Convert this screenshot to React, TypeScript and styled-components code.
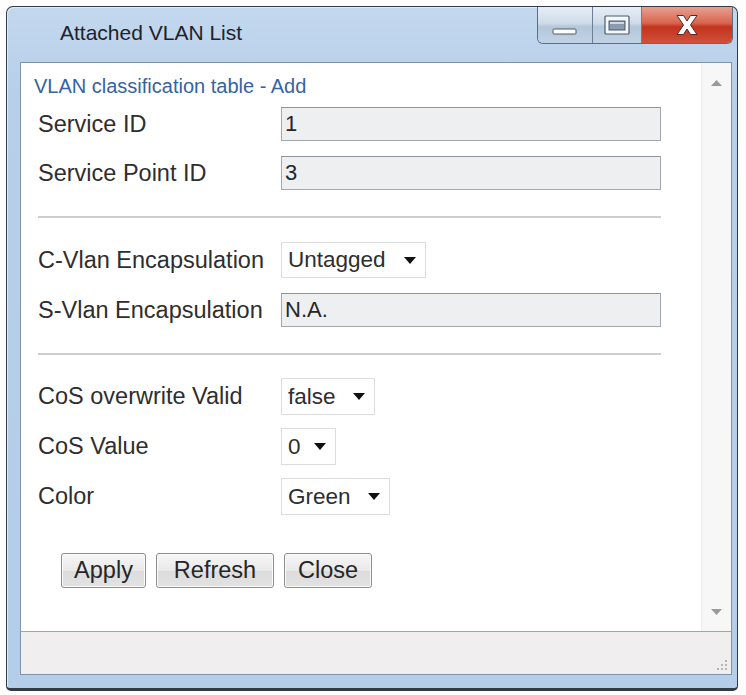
import styled, { createGlobalStyle } from "styled-components";

const GlobalStyle = createGlobalStyle`
  html, body {
    margin: 0;
    padding: 0;
    background: #fdfdfd;
  }
  body {
    font-family: "Liberation Sans", Arial, sans-serif;
  }
  * {
    box-sizing: border-box;
  }
`;

type Field = {
  label: string;
  kind: 'input' | 'select';
  value: string;
  width?: number;
  gap: number;
  height: number;
}

const topFields: Field[] = [
  { label: 'Service ID', kind: 'input', value: '1', gap: 9, height: 34 },
  { label: 'Service Point ID', kind: 'input', value: '3', gap: 15, height: 34 },
];

const vlanFields: Field[] = [
  { label: 'C-Vlan Encapsulation', kind: 'select', value: 'Untagged', width: 145, gap: 24, height: 36 },
  { label: 'S-Vlan Encapsulation', kind: 'input', value: 'N.A.', gap: 15, height: 34 },
];

const cosFields: Field[] = [
  { label: 'CoS overwrite Valid', kind: 'select', value: 'false', width: 94, gap: 23, height: 37 },
  { label: 'CoS Value', kind: 'select', value: '0', width: 55, gap: 13, height: 37 },
  { label: 'Color', kind: 'select', value: 'Green', width: 109, gap: 13, height: 37 },
];

const Caret = () => (
  <svg width="12" height="7" viewBox="0 0 12 7">
    <path d="M0 0 L12 0 L6 7 Z" fill="#111" />
  </svg>
);

const FieldRow: React.FC<{ field: Field }> = ({ field }) => (
  <Row $gap={field.gap}>
    <Label>{field.label}</Label>
    {field.kind === 'input' ? (
      <TextBox $h={field.height}>{field.value}</TextBox>
    ) : (
      <SelectBox $h={field.height} $w={field.width ?? 100}>
        <span>{field.value}</span>
        <Caret />
      </SelectBox>
    )}
  </Row>
);

export default function App() {
  return (
    <>
      <GlobalStyle />
      <Page>
        <Window>
          <TitleBar>
            <Title>Attached VLAN List</Title>
            <Captions>
              <CapButton>
                <svg width="26" height="8" viewBox="0 0 26 8">
                  <rect x="1" y="1" width="23" height="5" rx="1" fill="#fff" stroke="#4d5a69" strokeWidth="1" />
                </svg>
              </CapButton>
              <CapButton $narrow>
                <svg width="28" height="22" viewBox="0 0 28 22">
                  <rect x="2" y="2" width="24" height="18" rx="1" fill="#f4f7fb" stroke="#4d5a69" strokeWidth="1.2" />
                  <rect x="6" y="7" width="16" height="9" fill="#8a9ab0" stroke="#4d5a69" strokeWidth="1" />
                  <rect x="7" y="8" width="14" height="2" fill="#cfd9e5" />
                </svg>
              </CapButton>
              <CloseButton>
                <svg width="26" height="22" viewBox="0 0 26 22">
                  <path d="M3 1.5 L9.5 1.5 L13 7 L16.5 1.5 L23 1.5 L16.5 11 L23 20.5 L16.5 20.5 L13 15 L9.5 20.5 L3 20.5 L9.5 11 Z" fill="#fff" stroke="#5a2a22" strokeWidth="1" strokeLinejoin="round" />
                </svg>
              </CloseButton>
            </Captions>
          </TitleBar>
          <Client>
            <Main>
              <Content>
                <Heading>VLAN classification table - Add</Heading>
                <Form>
                  {topFields.map(f => <FieldRow key={f.label} field={f} />)}
                  <Separator />
                  {vlanFields.map(f => <FieldRow key={f.label} field={f} />)}
                  <Separator />
                  {cosFields.map(f => <FieldRow key={f.label} field={f} />)}
                  <Buttons>
                    <Button $w={85}>Apply</Button>
                    <Button $w={118}>Refresh</Button>
                    <Button $w={88}>Close</Button>
                  </Buttons>
                </Form>
              </Content>
              <ScrollBar>
                <svg width="11" height="6" viewBox="0 0 11 6">
                  <path d="M0 6 L5.5 0 L11 6 Z" fill="#9a9a9a" />
                </svg>
                <svg width="11" height="6" viewBox="0 0 11 6">
                  <path d="M0 0 L11 0 L5.5 6 Z" fill="#9a9a9a" />
                </svg>
              </ScrollBar>
            </Main>
            <StatusBar>
              <svg width="12" height="12" viewBox="0 0 12 12">
                <g fill="#b6b6b6">
                  <rect x="9" y="1" width="2" height="2" />
                  <rect x="5" y="5" width="2" height="2" />
                  <rect x="9" y="5" width="2" height="2" />
                  <rect x="1" y="9" width="2" height="2" />
                  <rect x="5" y="9" width="2" height="2" />
                  <rect x="9" y="9" width="2" height="2" />
                </g>
              </svg>
            </StatusBar>
          </Client>
        </Window>
      </Page>
    </>
  );
}

const Page = styled.div`
  padding: 6px 8px 4px 6px;
`;

const Window = styled.div`
  width: 732px;
  height: 685px;
  display: flex;
  flex-direction: column;
  padding: 0 5px 13px 13px;
  border: 1px solid #353b42;
  border-bottom-width: 3px;
  border-radius: 7px 7px 5px 5px;
  background: linear-gradient(180deg, #c3d8ee 0%, #b7cfe9 12%, #b4cde8 100%);
  box-shadow: inset 1px 1px 0 #dfeaf6;
`;

const TitleBar = styled.div`
  height: 55px;
  display: flex;
  justify-content: space-between;
  align-items: flex-start;
  margin-left: -13px;
  margin-right: -1px;
`;

const Title = styled.div`
  padding: 14px 0 0 53px;
  font-size: 21px;
  line-height: 24px;
  color: #1e2329;
`;

const Captions = styled.div`
  display: flex;
  height: 37px;
  border: 1px solid #5c6d82;
  border-top: none;
  border-radius: 0 0 6px 6px;
  overflow: hidden;
`;

const CapButton = styled.div<{ $narrow?: boolean }>`
  width: ${p => (p.$narrow ? 49 : 55)}px;
  display: flex;
  align-items: center;
  justify-content: center;
  padding-top: ${p => (p.$narrow ? 0 : 14)}px;
  border-right: 1px solid #6e7f94;
  background: linear-gradient(180deg, #e6eef7 0%, #cfdbe9 45%, #b4c6da 55%, #c2d3e5 100%);
`;

const CloseButton = styled.div`
  width: 90px;
  display: flex;
  align-items: center;
  justify-content: center;
  background: linear-gradient(180deg, #e9a091 0%, #d8644e 45%, #c3341e 55%, #d0503a 100%);
`;

const Client = styled.div`
  flex: 1;
  display: flex;
  flex-direction: column;
  background: #fff;
  border: 1px solid #7f93aa;
`;

const Main = styled.div`
  flex: 1;
  display: flex;
`;

const Content = styled.div`
  flex: 1;
  padding: 11px 0 0 13px;
`;

const Heading = styled.div`
  font-size: 20px;
  line-height: 24px;
  color: #3563a6;
`;

const Form = styled.div`
  width: 627px;
  padding-left: 4px;
`;

const Row = styled.div<{ $gap: number }>`
  display: grid;
  grid-template-columns: 243px 1fr;
  align-items: center;
  margin-top: ${p => p.$gap}px;
`;

const Label = styled.div`
  font-size: 23.5px;
  color: #2e2e2e;
  white-space: nowrap;
`;

const TextBox = styled.div<{ $h: number }>`
  height: ${p => p.$h}px;
  display: flex;
  align-items: center;
  padding-left: 3px;
  font-size: 22px;
  color: #262626;
  background: #eeeff0;
  border: 1px solid #a3a8ad;
  border-top-color: #8e949a;
`;

const SelectBox = styled.div<{ $h: number; $w: number }>`
  width: ${p => p.$w}px;
  height: ${p => p.$h}px;
  display: flex;
  align-items: center;
  justify-content: space-between;
  padding: 0 9px 0 6px;
  font-size: 22.5px;
  color: #2e2e2e;
  background: #fff;
  border: 1px solid #dcdcdc;
`;

const Separator = styled.div`
  height: 2px;
  background: #cdcdcd;
  margin-top: 26px;
`;

const Buttons = styled.div`
  display: flex;
  gap: 10px;
  margin: 38px 0 0 23px;
`;

const Button = styled.button<{ $w: number }>`
  width: ${p => p.$w}px;
  height: 35px;
  padding: 0;
  font-family: "Liberation Sans", Arial, sans-serif;
  font-size: 23.5px;
  color: #262626;
  background: linear-gradient(180deg, #f6f6f6 0%, #e9e9e9 50%, #dcdcdc 51%, #e2e2e2 100%);
  border: 1px solid #8d8d8d;
  border-radius: 3px;
  box-shadow: inset 0 0 0 1px #fbfbfb;
`;

const ScrollBar = styled.div`
  width: 30px;
  display: flex;
  flex-direction: column;
  align-items: center;
  justify-content: space-between;
  padding: 17px 0 16px;
  background: #f7f7f7;
  border-left: 1px solid #ececec;
`;

const StatusBar = styled.div`
  height: 43px;
  display: flex;
  justify-content: flex-end;
  align-items: flex-end;
  padding: 0 3px 3px 0;
  background: #f0eeee;
  border-top: 1px solid #a4a4a4;
`;
